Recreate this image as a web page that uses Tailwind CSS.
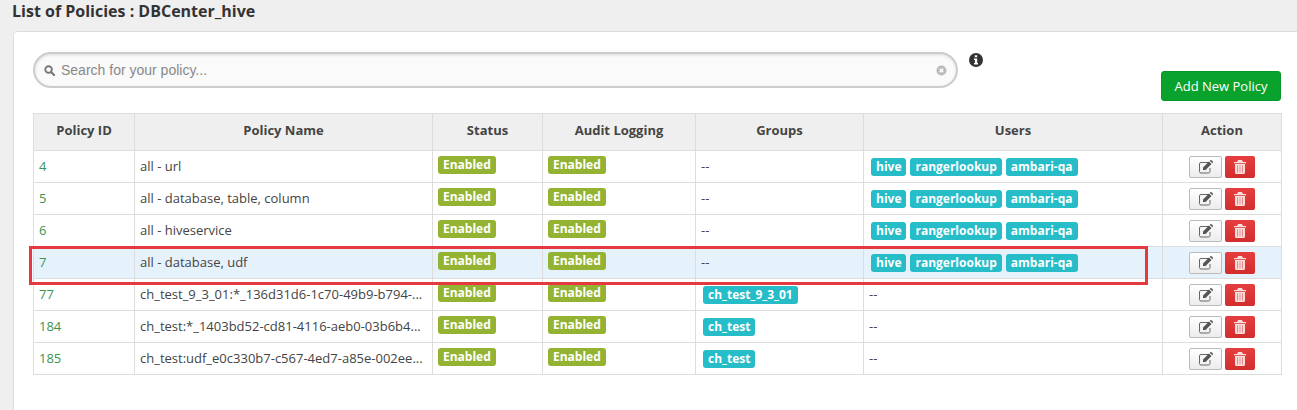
<!DOCTYPE html>
<html lang="en">
<head>
    <meta charset="UTF-8">
    <title>List of Policies</title>
    <script src="https://cdn.jsdelivr.net/npm/@tailwindcss/browser@4"></script>
</head>
<body class="bg-[#efefef] font-['Open_Sans',sans-serif] text-[13px] text-[#444] h-[410px] overflow-hidden">
<div class="relative h-[410px] pl-[12px]">
    <h3 class="h-[31px] pt-[1px] text-[16px] leading-[20px] font-bold text-[#333]">List of Policies : DBCenter_hive</h3>
    <div class="ml-[1px] h-[390px] bg-white border border-[#ddd] rounded-tl-[4px] pl-[19px] pt-[20px] w-[1290px]">
        <div class="flex h-[61px] w-[1248px] items-start">
            <div class="flex items-center h-[36px] w-[925px] bg-[#fafafa] border-2 border-[#ccc] rounded-[18px] shadow-[inset_0_1px_3px_rgba(0,0,0,0.12)] pl-[9px] pr-[9px]">
                <svg class="w-[11px] h-[11px] shrink-0" viewBox="0 0 12 12"><circle cx="5" cy="5" r="3.6" fill="none" stroke="#777" stroke-width="2"/><path d="M7.6 7.6 11 11" stroke="#777" stroke-width="2.4" stroke-linecap="round"/></svg>
                <span class="ml-[6px] flex-1 font-['Liberation_Sans',sans-serif] text-[14px] text-[#888]">Search for your policy...</span>
                <svg class="w-[11px] h-[11px] shrink-0" viewBox="0 0 12 12"><circle cx="6" cy="6" r="5.5" fill="#bbb"/><path d="M4 4l4 4M8 4l-4 4" stroke="#fff" stroke-width="1.5"/></svg>
            </div>
            <svg class="ml-[11px] mt-[1px] w-[14px] h-[14px] shrink-0" viewBox="0 0 14 14"><path fill="#333" fill-rule="evenodd" d="M7 0a7 7 0 1 1 0 14A7 7 0 0 1 7 0zM5.8 2.2v2h2.4v-2zM5 5.6v1.5h.9v3H5v1.500h4v-1.500h-.8V5.600z"/></svg>
            <button class="ml-auto mt-[19px] h-[30px] w-[120px] rounded-[3px] bg-[#09a22d] border border-[#08962a] text-white text-[13px] leading-[28px]">Add New Policy</button>
        </div>
        <table class="table-fixed border-collapse w-[1248px] border border-[#ddd]">
            <colgroup>
                <col class="w-[101px]"><col class="w-[298px]"><col class="w-[110px]"><col class="w-[153px]"><col class="w-[168px]"><col class="w-[299px]"><col class="w-[119px]">
            </colgroup>
            <thead class="bg-[#efefef] text-[13px] font-bold text-[#444]">
            <tr class="h-[37px]">
                <th class="border border-[#ddd] pb-[3px] text-center">Policy ID</th>
                <th class="border border-[#ddd] pb-[3px] text-center">Policy Name</th>
                <th class="border border-[#ddd] pb-[3px] text-center">Status</th>
                <th class="border border-[#ddd] pb-[3px] text-center">Audit Logging</th>
                <th class="border border-[#ddd] pb-[3px] text-center">Groups</th>
                <th class="border border-[#ddd] pb-[3px] text-center">Users</th>
                <th class="border border-[#ddd] pb-[3px] text-center">Action</th>
            </tr>
            </thead>
            <tbody id="rows">
            <tr class="h-[32px]">
                <td class="border border-[#ddd] pl-[5px] text-[#3a9454]"></td>
                <td class="border border-[#ddd] px-[5px] truncate"></td>
                <td class="border border-[#ddd] px-[5px] align-top pt-[4px]"><span class="inline-block h-[18px] px-[5px] rounded-[3px] bg-[#94b332] text-white text-[12px] leading-[17px] font-bold">Enabled</span></td>
                <td class="border border-[#ddd] px-[5px] align-top pt-[4px]"><span class="inline-block h-[18px] px-[5px] rounded-[3px] bg-[#94b332] text-white text-[12px] leading-[17px] font-bold">Enabled</span></td>
                <td class="border border-[#ddd] px-[5px]"></td>
                <td class="border border-[#ddd] px-[5px]"></td>
                <td class="border border-[#ddd]"><div class="flex justify-center gap-[3px]"><button class="flex items-center justify-center w-[33px] h-[22px] rounded-[2px] border border-[#bbb] bg-linear-to-b from-white to-[#ececec]"><svg class="w-[16px] h-[14px]" viewBox="0 0 15 14"><path d="M10.500 2.500H2.500A1.500 1.500 0 0 0 1 4v7.500A1.500 1.500 0 0 0 2.500 13H10a1.500 1.500 0 0 0 1.500-1.500V8" fill="none" stroke="#666" stroke-width="1"/><path fill="#555" d="M4.500 7.500 10.500 1.500 13 4 7 10H4.500zM11.300.8l.6-.6a.8.800 0 0 1 1.100 0l1.300 1.300a.8.800 0 0 1 0 1.100l-.6.6z"/></svg></button><button class="flex items-center justify-center w-[30px] h-[22px] rounded-[2px] bg-linear-to-b from-[#e63e3e] to-[#d22d2d]"><svg class="w-[12px] h-[14px]" viewBox="0 0 12 14"><path fill="#fbdcdc" d="M4 0h4l1 2h3v1.200H0V2h3zM1 4h10v8.500A1.500 1.500 0 0 1 9.500 14h-7A1.500 1.500 0 0 1 1 12.500z"/><path stroke="#e88a8a" d="M3.500 5.500v7M6 5.500v7M8.500 5.500v7"/></svg></button></div></td>
            </tr>
            </tbody>
        </table>
    </div>
    <div class="absolute left-[29px] top-[246px] w-[1119px] h-[39px] border-[3px] border-[#e4393f]"></div>
</div>
<span id="tag" class="hidden h-[18px] px-[5px] rounded-[3px] bg-[#26bcc8] text-white text-[12px] leading-[18px] font-bold"></span>
<script>
    const row = document.querySelector('#rows tr')
    const tag = document.getElementById('tag')
    const users = ['hive', 'rangerlookup', 'ambari-qa']
    const data = [
        ['4', 'all - url', null, users],
        ['5', 'all - database, table, column', null, users],
        ['6', 'all - hiveservice', null, users],
        ['7', 'all - database, udf', null, users],
        ['77', 'ch_test_9_3_01:*_136d31d6-1c70-49b9-b794-...', ['ch_test_9_3_01'], null],
        ['184', 'ch_test:*_1403bd52-cd81-4116-aeb0-03b6b4...', ['ch_test'], null],
        ['185', 'ch_test:udf_e0c330b7-c567-4ed7-a85e-002ee...', ['ch_test'], null],
    ]

    function fillTags(td, names) {
        if (!names) { td.textContent = '--'; return }
        const box = document.createElement('div')
        box.className = 'flex gap-[4px] pl-[2px]'
        names.forEach(name => {
            const s = tag.cloneNode()
            s.removeAttribute('id')
            s.classList.remove('hidden')
            s.textContent = name
            box.append(s)
        })
        td.append(box)
    }

    const tbody = row.parentNode
    row.remove()
    data.forEach(d => {
        const tr = row.cloneNode(true)
        tr.cells[0].textContent = d[0]
        tr.cells[1].textContent = d[1]
        fillTags(tr.cells[4], d[2])
        fillTags(tr.cells[5], d[3])
        if (d[0] === '7') tr.classList.add('bg-[#e6f2fb]')
        tbody.append(tr)
    })
</script>
</body>
</html>
